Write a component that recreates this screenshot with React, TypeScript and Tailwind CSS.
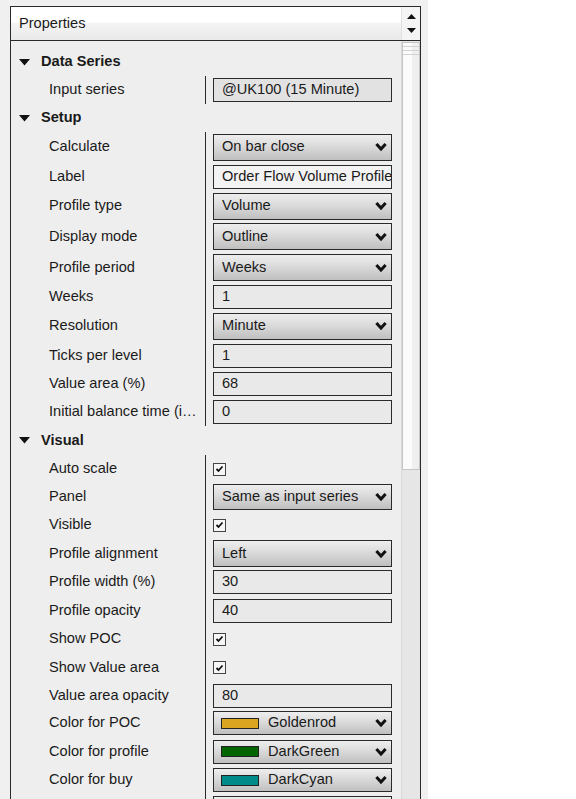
import React from 'react'

type Row =
  | { kind: 'text'; label: string; value: string; h: string; box?: string }
  | { kind: 'select'; label: string; value: string; h: string; box?: string }
  | { kind: 'check'; label: string; h: string }
  | { kind: 'color'; label: string; value: string; swatch: string; h: string }
  | { kind: 'blank'; label: string; h: string }

type Group = { title: string; h: string; rows: Row[] }

const groups: Group[] = [
  {
    title: 'Data Series',
    h: 'h-[28px]',
    rows: [{ kind: 'text', label: 'Input series', value: '@UK100 (15 Minute)', h: 'h-[28px]', box: 'bg-[#e2e2e2]' }],
  },
  {
    title: 'Setup',
    h: 'h-[28px]',
    rows: [
      { kind: 'select', label: 'Calculate', value: 'On bar close', h: 'h-[30px]' },
      { kind: 'text', label: 'Label', value: 'Order Flow Volume Profile', h: 'h-[29px]', box: 'bg-[#f3f3f3]' },
      { kind: 'select', label: 'Profile type', value: 'Volume', h: 'h-[30px]' },
      { kind: 'select', label: 'Display mode', value: 'Outline', h: 'h-[31px]' },
      { kind: 'select', label: 'Profile period', value: 'Weeks', h: 'h-[31px]' },
      { kind: 'text', label: 'Weeks', value: '1', h: 'h-[28px]' },
      { kind: 'select', label: 'Resolution', value: 'Minute', h: 'h-[30px]' },
      { kind: 'text', label: 'Ticks per level', value: '1', h: 'h-[29px]' },
      { kind: 'text', label: 'Value area (%)', value: '68', h: 'h-[28px]' },
      { kind: 'text', label: 'Initial balance time (i…', value: '0', h: 'h-[28px]' },
    ],
  },
  {
    title: 'Visual',
    h: 'h-[29px]',
    rows: [
      { kind: 'check', label: 'Auto scale', h: 'h-[28px]' },
      { kind: 'select', label: 'Panel', value: 'Same as input series', h: 'h-[28px]', box: 'h-[26px]' },
      { kind: 'check', label: 'Visible', h: 'h-[28px]' },
      { kind: 'select', label: 'Profile alignment', value: 'Left', h: 'h-[29px]' },
      { kind: 'text', label: 'Profile width (%)', value: '30', h: 'h-[28px]' },
      { kind: 'text', label: 'Profile opacity', value: '40', h: 'h-[29px]' },
      { kind: 'check', label: 'Show POC', h: 'h-[28px]' },
      { kind: 'check', label: 'Show Value area', h: 'h-[29px]' },
      { kind: 'text', label: 'Value area opacity', value: '80', h: 'h-[27px]' },
      { kind: 'color', label: 'Color for POC', value: 'Goldenrod', swatch: 'bg-[#daa520]', h: 'h-[28px]' },
      { kind: 'color', label: 'Color for profile', value: 'DarkGreen', swatch: 'bg-[#006400]', h: 'h-[29px]' },
      { kind: 'color', label: 'Color for buy', value: 'DarkCyan', swatch: 'bg-[#008b8b]', h: 'h-[28px]' },
      { kind: 'blank', label: '', h: 'h-[28px]' },
    ],
  },
]

function Chevron() {
  return (
    <svg width="12" height="10" viewBox="0 0 12 10" className="shrink-0">
      <polyline points="1.4,2 6,7 10.6,2" fill="none" stroke="#111" strokeWidth="3" strokeLinejoin="miter" />
    </svg>
  )
}

function CheckBox() {
  return (
    <div className="w-[13px] h-[13px] border border-[#444] bg-[#f6f6f6] flex items-center justify-center">
      <svg width="9" height="8" viewBox="0 0 9 8">
        <polyline points="1.5,4 3.5,6 7.5,1.5" fill="none" stroke="#111" strokeWidth="1.8" />
      </svg>
    </div>
  )
}

const dropBg = 'bg-[linear-gradient(to_bottom,#eeeeee_0%,#d8d8d8_50%,#bfbfbf_100%)]'

function Value({ row }: { row: Row }) {
  if (row.kind === 'check') return <CheckBox />
  if (row.kind === 'blank')
    return <div className={`w-[179px] h-[24px] border border-[#2a2a2a] ${dropBg}`} />
  if (row.kind === 'text')
    return (
      <div
        className={`w-[179px] h-[24px] border border-[#2a2a2a] ${row.box ?? 'bg-[#e9e9e9]'} pl-[8px] flex items-center overflow-hidden whitespace-nowrap`}
      >
        {row.value}
      </div>
    )
  if (row.kind === 'select')
    return (
      <div
        className={`w-[179px] ${row.box ?? 'h-[27px]'} border border-[#2a2a2a] ${dropBg} pl-[8px] pr-[4px] flex items-center justify-between whitespace-nowrap`}
      >
        <span>{row.value}</span>
        <Chevron />
      </div>
    )
  return (
    <div className={`w-[179px] h-[24px] border border-[#2a2a2a] ${dropBg} pl-[7px] pr-[4px] flex items-center whitespace-nowrap`}>
      <div className={`w-[38px] h-[11px] border border-[#222] ${row.swatch}`} />
      <span className="ml-[9px] flex-1">{row.value}</span>
      <Chevron />
    </div>
  )
}

function Triangle() {
  return (
    <svg width="11" height="7" viewBox="0 0 11 7" className="shrink-0">
      <polygon points="0,0 11,0 5.5,6.5" fill="#111" />
    </svg>
  )
}

export default function App() {
  return (
    <div className="w-[576px] h-[799px] overflow-hidden bg-white flex font-['Liberation_Sans',Arial,sans-serif] text-[14.6px] text-[#1a1a1a]">
      <div className="w-[428px] h-full bg-[#f0f0f0] pt-[6px] pl-[10px]">
        <div className="w-[411px] h-[820px] border border-[#2a2a2a] flex flex-col">
          {/* header */}
          <div className="h-[34px] flex border-b border-[#2a2a2a] shrink-0">
            <div className="flex-1 bg-[linear-gradient(to_bottom,#ffffff_0%,#ffffff_46%,#f4f4f4_50%,#e9e9e9_100%)] pl-[8px] pt-[1px] flex items-center">
              Properties
            </div>
            <div className="w-[19px] bg-[#f4f4f4] flex flex-col items-center justify-center gap-[9px] border-l border-[#e2e2e2]">
              <svg width="9" height="5" viewBox="0 0 9 5">
                <polygon points="0,5 9,5 4.5,0" fill="#111" />
              </svg>
              <svg width="9" height="5" viewBox="0 0 9 5">
                <polygon points="0,0 9,0 4.5,5" fill="#111" />
              </svg>
            </div>
          </div>
          {/* body */}
          <div className="flex flex-1">
            <div className="flex-1 bg-[#eeeeee] pt-[7px]">
              {groups.map((g) => (
                <div key={g.title}>
                  <div className={`${g.h} flex items-center pl-[8px]`}>
                    <Triangle />
                    <span className="ml-[11px] font-bold">{g.title}</span>
                  </div>
                  {g.rows.map((r, i) => (
                    <div key={r.label + i} className={`${r.h} flex`}>
                      <div className="w-[194px] pl-[38px] flex items-center whitespace-nowrap overflow-hidden">
                        {r.label}
                      </div>
                      <div className="flex-1 border-l border-[#2a2a2a] pl-[7px] flex items-center">
                        <Value row={r} />
                      </div>
                    </div>
                  ))}
                </div>
              ))}
            </div>
            {/* scrollbar */}
            <div className="w-[19px] bg-[#e6e6e6] border-l border-[#d8d8d8] pt-[1px]">
              <div className="h-[428px] border border-[#c6c6c6] flex">
                <div className="w-[9px] bg-[#fbfbfb] flex flex-col pt-[3px] gap-[1px]">
                  <div className="h-[1px] bg-[#d2d2d2]" />
                  <div className="h-[1px] bg-[#fbfbfb]" />
                  <div className="h-[1px] bg-[#d2d2d2]" />
                  <div className="h-[1px] bg-[#fbfbfb]" />
                  <div className="h-[1px] bg-[#d2d2d2]" />
                </div>
                <div className="flex-1 bg-[#efefef] flex flex-col pt-[3px] gap-[1px]">
                  <div className="h-[1px] bg-[#d2d2d2]" />
                  <div className="h-[1px] bg-[#efefef]" />
                  <div className="h-[1px] bg-[#d2d2d2]" />
                  <div className="h-[1px] bg-[#efefef]" />
                  <div className="h-[1px] bg-[#d2d2d2]" />
                </div>
              </div>
            </div>
          </div>
        </div>
      </div>
    </div>
  )
}
